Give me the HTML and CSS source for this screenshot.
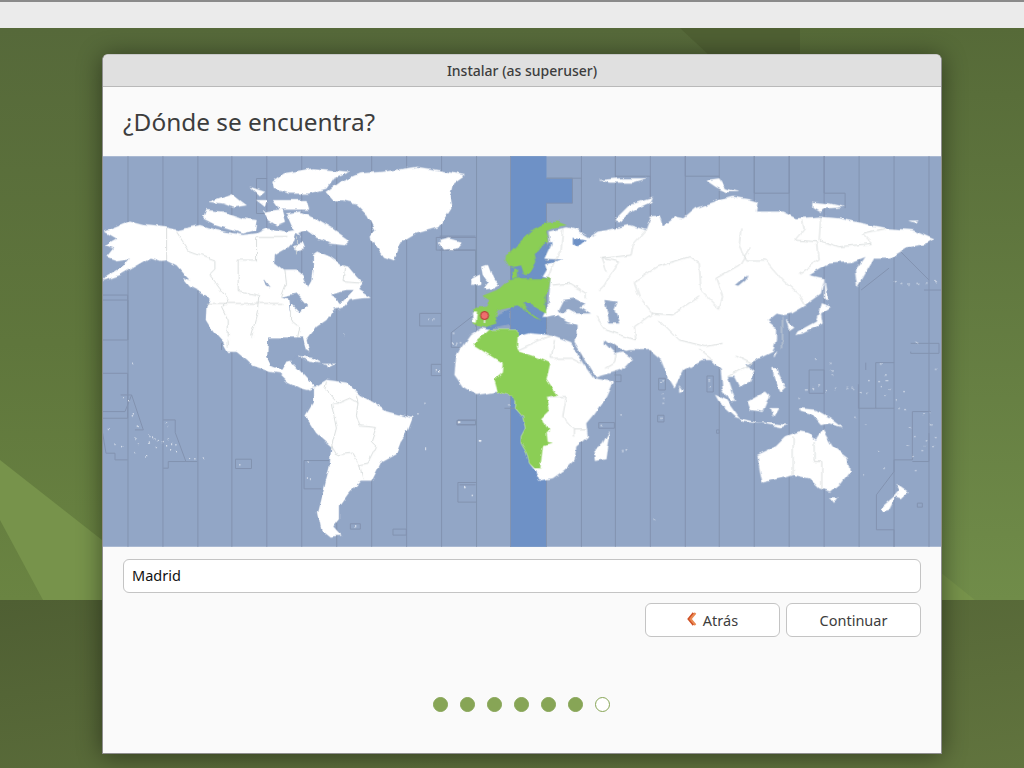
FILE: index.html
```html
<!DOCTYPE html>
<html lang="es">
<head>
  <meta charset="UTF-8">
  <title>Instalar (as superuser)</title>
  <link rel="stylesheet" href="styles.css">
</head>
<body>

  <div class="topBar"></div>

  <div class="desktop">
    <!-- wallpaper shapes -->
    <svg class="wallpaper" viewBox="0 28 1024 740" preserveAspectRatio="none">
      <defs>
        <linearGradient id="wallTop" x1="0" y1="0" x2="0" y2="1">
          <stop offset="0" stop-color="#56693a"/>
          <stop offset="0.55" stop-color="#5f763c"/>
          <stop offset="1" stop-color="#6a8442"/>
        </linearGradient>
        <linearGradient id="wallRight" x1="0" y1="0" x2="0" y2="1">
          <stop offset="0" stop-color="#566a38"/>
          <stop offset="1" stop-color="#708c49"/>
        </linearGradient>
        <linearGradient id="wallLow" x1="0" y1="0" x2="1" y2="1">
          <stop offset="0" stop-color="#4f5f33"/>
          <stop offset="1" stop-color="#61743e"/>
        </linearGradient>
      </defs>
      <rect x="0" y="28" width="1024" height="572" fill="url(#wallTop)"/>
      <rect x="800" y="28" width="224" height="572" fill="url(#wallRight)"/>
      <polygon points="680,28 800,28 800,140" fill="#4f6033"/>
      <polygon points="0,460 102,540 102,600 43,600 0,520" fill="#77934b"/>
      <polygon points="940,572 975,600 940,600" fill="#77934b"/>
      <rect x="0" y="600" width="1024" height="168" fill="url(#wallLow)"/>
    </svg>

    <div class="window">
      <div class="titleBar">Instalar (as superuser)</div>
      <h1 class="heading">¿Dónde se encuentra?</h1>

      <svg class="map" viewBox="103 156 839 391">
        <defs>
          <filter id="coast" filterUnits="userSpaceOnUse" x="103" y="156" width="839" height="391">
            <feTurbulence type="fractalNoise" baseFrequency="0.09" numOctaves="3" seed="4"/>
            <feDisplacementMap in="SourceGraphic" scale="5" xChannelSelector="R" yChannelSelector="G"/>
            <feGaussianBlur stdDeviation="0.35"/>
          </filter>
        </defs>
        <rect class="sea" x="103" y="156" width="839" height="391"/>
        <path class="band" d="M511 156H547V178H573V203H547V547H511Z"/>

        <!-- time zone lines -->
        <path class="tz" d="M128 156V547M163 156V547M198 156V547M232 156V547M267 156V547M302 156V547M337 156V547M372 156V547M407 156V547M442 156V547M477 156V547M511 156V547M547 203V547M582 156V547M616 156V547M651 156V547M686 156V547M720 156V547M755 156V547M790 156V547M825 156V547M860 156V547M895 156V547M930 156V547"/>
        <path class="tz" d="M547 178H573V203H547M547 178H582M582 178V186M616 156V176H651V215M686 156V176H720M755 156V193H790V156M825 156V193H846V208M890 240L930 280M862 290L890 268M925 290H942M103 300H128V340"/>
        <g transform="translate(100 150) scale(.33333)">
          <path class="tz" d="M8 435H83V570H8M365 600V580H397M470 85H502M470 85V190H502M1010 262H1130V300H1010ZM960 490H1025V528H960ZM1130 490L1055 548V592H1110"/>
        </g>
        <g transform="translate(100 340) scale(.33333)">
          <path class="tz" d="M8 100H83V235H8M8 215H75M62 165H95L75 215M95 165L130 270H105M190 240H226V278L258 365H205V385H190M8 280L18 340H45V360H83M258 365H292M407 358H455V386H407ZM613 362H688M613 362V447H665M995 73H1025V107H995ZM1075 240H1130M1075 240V254H1130M1075 428H1130M1075 428V487H1130M880 568H920V586H880ZM752 552H782V568H752Z"/>
        </g>
        <g transform="translate(440 210) scale(.33333)">
          <path class="tz" d="M0 120H108V350M0 78H108"/>
        </g>
        <g transform="translate(440 330) scale(.33333)">
          <path class="tz" d="M52 272H108V285H52ZM195 235H228M60 465H108M525 135H545V155H525M478 278H525V295H478Z"/>
        </g>
        <g transform="translate(640 340) scale(.33333)">
          <path class="tz" d="M58 115H78V150H58ZM55 226H74V246H55ZM203 108H222V156H203ZM232 270H240V280H232ZM510 90V160H555V90M510 90H555M658 133V205H710V68H765M710 205H765M680 68V90M835 490H850V502H835ZM712 465L765 395V360H820V215H875M712 465V570H765V620M815 10H900V40H815V35M820 365H870V280"/>
        </g>

        <g filter="url(#coast)">
          <!-- north america, greenland, arctic -->
          <g transform="translate(100 150) scale(.33333)">
            <path class="land" d="M10 392L60 375L110 345L150 322L180 332L200 330L230 345L255 375L275 395L250 385L270 410L322 436L330 447L320 470L318 510L340 545L370 578L385 605L505 605L510 585L610 570L618 600L628 605L620 570L650 530L680 510L700 480L735 470L750 450L780 445L812 443L775 420L790 400L770 380L745 350L725 345L690 320L655 305L640 315L640 350L635 390L625 408L610 378L590 362L550 362L522 340L525 315L560 295L580 272L590 235L602 265L585 240L560 245L500 235L470 250L430 255L350 240L300 225L235 240L200 232L130 225L90 215L15 245L50 265L15 285L40 295L20 320L50 330L90 325L70 350L20 380Z"/>
            <path class="land" d="M678 125L720 95L780 70L850 65L950 50L1030 62L1095 75L1060 100L1050 140L1055 175L1020 230L950 250L900 280L880 330L850 320L830 290L810 260L825 240L800 190L770 160L730 150L700 150Z"/>
            <path class="land" d="M515 95L550 70L640 55L750 65L700 85L680 115L630 130L570 130L520 115ZM310 205L320 180L370 185L430 205L470 210L465 240L430 250L350 225ZM330 155L395 130L420 150L440 165L400 172L370 160ZM450 110L495 125L480 138ZM470 150L500 150L495 170ZM490 185L545 178L555 215L530 225L500 205ZM560 190L600 185L640 200L700 235L750 270L735 285L690 280L650 262L620 240L590 250L575 225ZM520 150L620 150L628 178L540 178ZM580 285L610 280L615 295L590 300ZM650 250L665 248L660 262Z"/>
            <path class="land" d="M1015 275L1050 265L1085 275L1070 295L1030 298ZM1118 385L1140 375L1142 400L1115 407ZM1148 350L1165 345L1180 385L1195 408L1160 418L1168 395Z"/>
            <path class="sea" d="M545 440L590 430L622 465L600 487L575 460L570 485L565 445ZM490 385L510 412L497 405ZM690 432L740 420L762 420L722 462L712 445Z"/>
            <path class="bd" d="M200 232V330M230 245L265 300L345 330V360L330 375L385 450L365 470L385 510V590M470 262V330H415V425L480 440L475 490L455 560L465 600M470 262H560M590 262V310M555 360L560 400L545 440M575 480V510L600 530L590 580M735 345L730 395L790 400M318 460L545 460"/>
            <path class="dot" d="M985 508h0M1000 510h0M732 553h0M1060 583h0M1075 580h0"/>
          </g>

          <!-- central and south america, pacific -->
          <g transform="translate(100 340) scale(.33333)">
            <path class="land" d="M378 -10L410 35L440 60L455 75L510 95L540 100L565 125L605 145L625 150L645 140L505 -10Z"/>
            <path class="sea" d="M505 -8L610 -8L618 30L622 35L610 50L590 45L575 60L565 62L545 90L515 78L502 50Z"/>
            <path class="land" d="M540 100L560 62L575 60L565 90L590 118L610 145L580 130ZM595 48L640 55L665 70L630 65ZM670 72L705 72L690 80Z"/>
            <path class="land" d="M640 145L680 120L740 128L780 165L830 195L860 215L938 235L925 270L905 300L890 340L845 365L815 425L780 425L745 465L720 500L720 535L700 560L725 587L690 590L665 570L655 520L670 460L690 380L695 320L650 280L617 228L640 190Z"/>
            <path class="bd" d="M680 125L675 150L715 190L695 190L710 265L695 320L710 345L760 340L780 375L805 370L830 320L815 305L830 260L780 255L770 225L775 190L770 165M715 190L750 175L775 190M780 375L790 420"/>
            <path class="dot" d="M98 70h0M70 172h0M85 185h0M97 228h0M100 222h0M118 256h0M25 268h0M200 250h0M208 260h0M105 298h0M147 292h0M158 295h0M165 298h0M175 302h0M190 308h0M145 310h0M115 312h0M45 313h0M68 320h0M205 298h0M200 318h0M215 310h0M228 315h0M212 330h0M230 335h0M172 325h0M102 338h0M140 348h0M272 354h0M288 354h0M313 355h0M420 375h0M625 367h0M620 418h0M632 418h0M976 190h0M955 222h0M1080 247h0M1140 300h0M978 328h0M1096 443h0M1115 467h0M765 558h0M1010 90h0M1020 95h0"/>
          </g>

          <!-- europe -->
          <g transform="translate(440 210) scale(.33333)">
            <path class="land" d="M0 95L30 90L65 97L40 117L10 112ZM125 170L140 165L150 190L170 225L165 235L130 235L145 215L130 195ZM95 210L120 195L120 220L100 227Z"/>
            <path class="band" d="M155 322L213 296V345L135 362Z"/>
          </g>

          <!-- africa, arabia -->
          <g transform="translate(440 330) scale(.33333)">
            <path class="land" d="M95 15L125 -5L150 0L232 0L232 20L270 10L330 15L395 40L430 100L462 145L520 155L500 200L465 250L440 280L445 320L410 350L405 390L375 420L340 445L300 452L285 420L270 400L262 370L245 340L245 320L258 295L250 260L228 235L230 200L175 185L110 195L70 170L45 135L50 80L60 65Z"/>
            <path class="land" d="M405 35L420 -10L500 -10L495 40L525 70L548 65L578 85L545 120L470 142L445 100Z"/>
            <path class="land" d="M510 305L498 385L470 390L465 360L490 340Z"/>
            <path class="bd" d="M335 85H395L425 100M320 150L325 200H380L370 260L405 300H440M405 300V320M345 30L335 85M530 70L525 100L500 115M235 60L335 15"/>
            <path class="dot" d="M42 10h0M40 42h0M52 45h0M66 38h0M2 125h0M60 277h0M120 330h0M75 472h0M208 225h0M548 255h0M486 287h0M550 362h0M564 357h0"/>
          </g>

          <!-- eurasia -->
          <g transform="translate(520 150) scale(.33333)">
            <path class="land" d="M140 232L175 240L210 262L235 245L265 240L330 225L380 240L395 200L420 195L430 230L470 200L495 205L530 175L600 150L640 140L690 148L715 155L710 185L790 185L830 205L900 200L960 205L1030 220L1110 235L1180 240L1245 268L1215 285L1160 295L1110 325L1065 325L1030 385L1015 410L1008 365L1040 320L1000 335L930 340L870 375L915 385L905 430L850 470L815 490L795 495L770 490L745 510L770 530L770 570L760 605L710 630L680 645L705 665L690 695L660 710L645 680L625 680L650 755L635 755L610 715L605 660L575 630L550 630L495 660L465 715L450 690L425 630L390 600L330 600L320 602L290 590L262 570L240 555L170 560L172 525L140 515L115 495L85 500L70 500L85 470L90 385L70 380L85 355L80 340L130 328L78 325L100 280L92 275L88 245Z"/>
            <path class="land" d="M285 210L330 165L400 143L395 155L340 180L310 215ZM240 90L300 85L380 85L340 97L270 97ZM560 90L600 85L620 115L655 125L620 125L590 110ZM880 155L930 160L975 170L920 175L905 185L880 170ZM1170 212H1195L1185 217ZM915 385L925 450L915 445ZM905 460L935 470L905 490L910 520L850 550L830 555L835 545L890 515L900 485ZM800 510L825 530L810 540L805 520Z"/>
            <path class="sea" d="M115 480L130 450L165 445L195 460L180 470L215 490L170 490L150 480L125 490ZM255 450L295 455L285 480L300 520L270 520L262 480ZM650 405L685 375L680 390L660 407ZM85 500L115 495L140 515L170 525L172 555L150 565L80 555Z"/>
            <path class="band" d="M80 330L130 328L85 338ZM90 280L100 275L78 322L70 300ZM160 260L205 268L175 292L160 280Z"/>
            <path class="bd" d="M130 235L125 300L100 345L85 385M95 405L150 400L200 430L200 445M245 325L300 335L270 380L255 405L240 420M380 240L340 285L335 315L245 325L260 365M345 395L415 350L510 320L540 340L545 420L600 475L610 440L590 385L660 345L690 295M665 235L660 290L680 330L740 330L790 390L840 435L860 470M840 370L900 330L895 275L830 270L855 240L850 210M905 200L900 270L960 290L1060 280L1030 250L1100 235M345 395L360 440L400 490L460 495L540 440M230 500L260 540L350 570L345 530L400 490M420 510L480 570L560 590L610 580M790 500V595M650 615L700 640L625 680M540 600L580 630"/>
            <path class="dot" d="M1130 395h0M1150 403h0M1170 405h0M1195 403h0M1220 402h0M1245 398h0M1190 580h0"/>
          </g>

          <!-- south east asia, oceania -->
          <g transform="translate(640 340) scale(.33333)">
            <path class="land" d="M355 345L410 320L440 290L480 275L510 280L530 300L550 270L580 320L625 355L632 395L605 430L575 455L540 445L510 415L465 405L370 428L362 390Z"/>
            <path class="land" d="M570 473L597 473L585 492ZM770 430L805 455L785 475L770 470L750 510L730 515L725 505L765 470L782 450ZM480 205L530 210L575 235L610 262L570 250L545 255L520 225L485 215ZM325 185L380 155L390 165L370 215L335 210ZM228 165L260 180L300 235L285 230L245 195ZM300 235L360 250L310 245ZM395 205L420 205L405 230ZM400 85L415 85L420 105L440 140L425 155L405 115ZM120 140L130 155L120 158ZM360 248L445 255L425 262ZM405 40L413 35L405 52Z"/>
            <path class="bd" d="M462 290V405M525 305V365H548V450"/>
            <path class="dot" d="M65 125h0M72 120h0M70 160h0M73 175h0M72 190h0M65 235h0M210 120h0M212 140h0M533 60h0M575 70h0M578 90h0M580 103h0M540 135h0M522 143h0M560 152h0M590 148h0M622 145h0M640 145h0M665 155h0M685 157h0M692 125h0M720 125h0M745 125h0M725 140h0M750 150h0M738 165h0M795 158h0M770 180h0M780 205h0M795 212h0M875 220h0M855 225h0M815 260h0M875 255h0M830 290h0M805 315h0M860 300h0M855 320h0M850 335h0M825 350h0M885 320h0M890 290h0M735 385h0M672 405h0M830 395h0M720 335h0M45 538h0M725 72h0M740 105h0M890 88h0M835 12h0M480 175h0M500 150h0M650 235h0M680 255h0"/>
          </g>

          <!-- selected zone, painted over the land -->
          <g transform="translate(440 210) scale(.33333)">
            <path class="zone" d="M197 135L215 125L250 90L285 58L320 38L355 35L380 45L350 50L320 62L328 95L305 105L285 130L290 155L272 190L255 195L245 165L225 170L205 165L195 150ZM225 175L235 180L235 205L220 205Z"/>
            <path class="zone" d="M130 258L175 240L205 212L245 205L300 205L330 205L325 235L315 265L320 310L300 300L275 285L250 280L270 305L303 327L285 320L250 295L230 285L200 295L175 300L165 318L170 340L135 352L112 346L100 340L100 295L140 290L150 270Z"/>
            <path class="land" d="M98 305L112 305L108 338L100 336Z"/>
          </g>
          <g transform="translate(440 330) scale(.33333)">
            <path class="zone" d="M150 0L232 0L235 15L232 50L240 65L300 85L332 100L320 150L352 195L322 200L330 240L305 265L318 295L332 300L318 310L322 340L335 342L310 348L302 415L285 415L270 400L262 370L245 340L245 320L258 295L250 260L228 235L230 215L225 200L175 185L165 150L188 130L190 100L102 45L110 35Z"/>
          </g>
        </g>

        <!-- pin on madrid -->
        <path class="pinStem" d="M485 319V323"/>
        <circle class="pin" cx="485" cy="315.500" r="4"/>
      </svg>

      <div class="controls">
        <input class="cityInput" type="text" value="Madrid">
        <div class="buttons">
          <button class="btn">
            <svg class="backIcon" viewBox="0 0 10 14"><path d="M6.500 1L1.500 7L6.500 13"/><path class="backInner" d="M8.500 1L3.500 7L8.500 13"/></svg>
            Atrás
          </button>
          <button class="btn">Continuar</button>
        </div>
      </div>

      <div class="steps">
        <span class="step done"></span>
        <span class="step done"></span>
        <span class="step done"></span>
        <span class="step done"></span>
        <span class="step done"></span>
        <span class="step done"></span>
        <span class="step"></span>
      </div>
    </div>
  </div>

</body>
</html>
```

FILE: styles.css
```css
html, body {
  margin: 0;
  height: 100%;
}

body {
  display: flex;
  flex-direction: column;
  overflow: hidden;
  font-family: "Noto Sans", "Open Sans", sans-serif;
  color: #3d3d3d;
}

.topBar {
  height: 26px;
  flex: none;
  background-color: #ebebeb;
  border-top: 2px solid #8a8a8a;
}

.desktop {
  position: relative;
  flex: 1;
  display: flex;
  justify-content: center;
  align-items: flex-start;
  padding: 26px 0 0 0;
}

.wallpaper {
  position: absolute;
  top: 0;
  left: 0;
  width: 100%;
  height: 100%;
}

.window {
  position: relative;
  width: 838px;
  height: 698px;
  margin-left: 20px;
  display: flex;
  flex-direction: column;
  background-color: #fafafa;
  border: 1px solid #8f8f8f;
  border-top-color: #c8c8c8;
  border-radius: 6px 6px 0 0;
  box-shadow: 0 2px 24px rgba(0, 0, 0, 0.45);
}

.titleBar {
  height: 31px;
  flex: none;
  line-height: 31px;
  text-align: center;
  font-size: 14px;
  font-weight: 500;
  color: #3d3d3d;
  background-color: #e0e0e0;
  border-bottom: 1px solid #b9b9b9;
  border-radius: 5px 5px 0 0;
}

.heading {
  height: 69px;
  flex: none;
  margin: 0;
  padding-left: 20px;
  line-height: 69px;
  font-size: 24.400px;
  font-weight: 400;
}

.map {
  display: block;
  width: 838px;
  height: 391px;
  flex: none;
}

.sea { fill: #92a6c6; }
.band { fill: #6e91c6; }
.land { fill: #fff; stroke: #fff; stroke-width: 1; stroke-linejoin: round; }
.zone { fill: #8bce55; stroke: #8bce55; stroke-width: 1; stroke-linejoin: round; }
.tz { fill: none; stroke: #8393b0; stroke-width: 1; }
g .tz { stroke-width: 3; }
.bd { fill: none; stroke: #d4d8d8; stroke-width: 2.500; stroke-linejoin: round; }
.dot { fill: none; stroke: #fff; stroke-width: 4; stroke-linecap: round; }
.pin { fill: #ee6f6f; stroke: #b03030; stroke-width: 1; }
.pinStem { stroke: #e8e8e8; stroke-width: 1.500; }

.controls {
  display: flex;
  flex-direction: column;
  gap: 10px;
  padding: 12px 20px 0 20px;
}

.cityInput {
  box-sizing: border-box;
  width: 100%;
  height: 34px;
  padding: 0 8px 2px 8px;
  font-family: inherit;
  font-size: 14.500px;
  color: #111;
  background-color: #fff;
  border: 1px solid #c4c4c4;
  border-radius: 6px;
  outline: none;
}

.buttons {
  display: flex;
  justify-content: flex-end;
  gap: 6px;
}

.btn {
  box-sizing: border-box;
  width: 135px;
  height: 34px;
  padding: 0;
  display: flex;
  align-items: center;
  justify-content: center;
  gap: 6px;
  font-family: inherit;
  font-size: 14.500px;
  color: #3d3d3d;
  background-color: #fff;
  border: 1px solid #c4c4c4;
  border-radius: 6px;
}

.backIcon {
  width: 10px;
  height: 14px;
  margin-top: -2px;
}

.backIcon path {
  fill: none;
  stroke: #cf4f24;
  stroke-width: 2;
}

.backIcon .backInner {
  stroke: #ea8a52;
}

.steps {
  display: flex;
  justify-content: center;
  gap: 12px;
  margin-top: 60px;
  padding-right: 2px;
}

.step {
  box-sizing: border-box;
  width: 15px;
  height: 15px;
  border-radius: 50%;
  background-color: #fff;
  border: 1px solid #87a556;
}

.step.done {
  background-color: #87a556;
}
```
